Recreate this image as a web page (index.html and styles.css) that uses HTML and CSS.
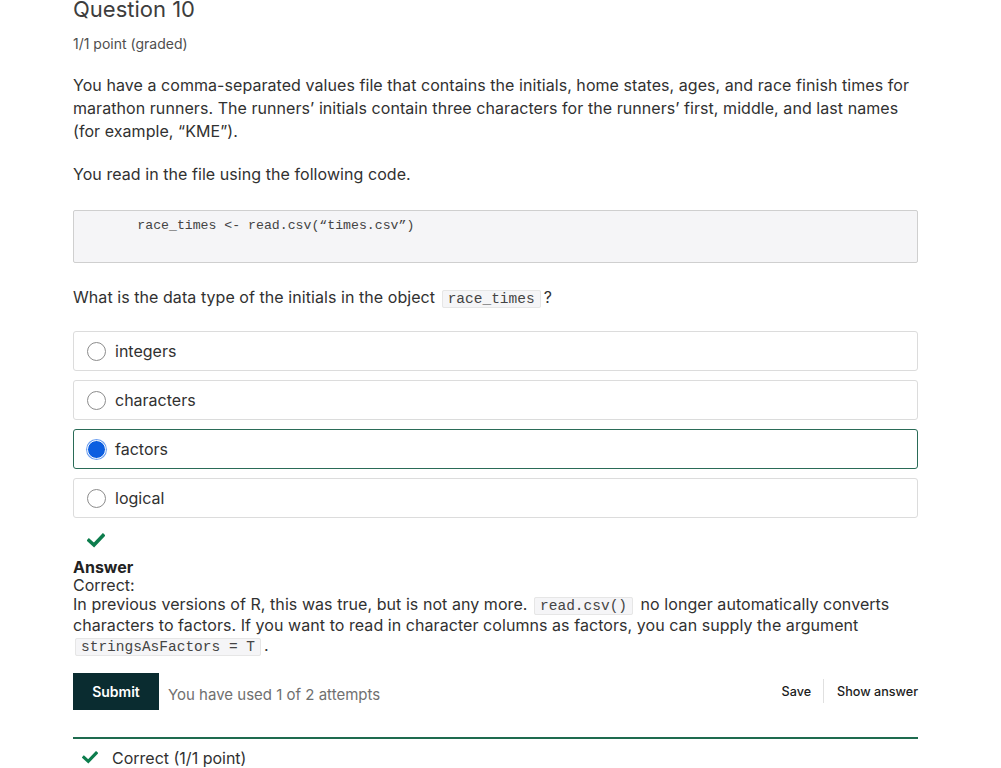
FILE: index.html
```html
<!DOCTYPE html>
<html lang="en">
<head>
<meta charset="utf-8">
<title>Question 10</title>
<link rel="stylesheet" href="styles.css">
</head>
<body>
<main class="problem">
  <h3 class="title">Question 10</h3>
  <div class="points">1/1 point (graded)</div>
  <p class="para">You have a comma-separated values file that contains the initials, home states, ages, and race finish times for marathon runners. The runners’ initials contain three characters for the runners’ first, middle, and last names (for example, “KME”).</p>
  <p class="para">You read in the file using the following code.</p>
  <pre class="codeblock">        race_times &lt;- read.csv(“times.csv”)</pre>
  <p class="para question">What is the data type of the initials in the object <code class="inline">race_times</code>?</p>
  <div class="options">
    <label class="option"><span class="radio"></span><span class="opt-text">integers</span></label>
    <label class="option"><span class="radio"></span><span class="opt-text">characters</span></label>
    <label class="option selected"><span class="radio checked"></span><span class="opt-text">factors</span></label>
    <label class="option"><span class="radio"></span><span class="opt-text">logical</span></label>
  </div>
  <div class="status-check">
    <svg width="18" height="15" viewBox="0 0 18 15"><path d="M2 7.5 L7 12 L16 2.5" fill="none" stroke="#0d7d4d" stroke-width="3.6" stroke-linecap="square"/></svg>
  </div>
  <div class="answer">
    <div class="answer-label">Answer</div>
    <div class="correct-label">Correct:</div>
    <div class="explanation">In previous versions of R, this was true, but is not any more. <code class="inline">read.csv()</code> no longer automatically converts characters to factors. If you want to read in character columns as factors, you can supply the argument <code class="inline">stringsAsFactors = T</code>.</div>
  </div>
  <div class="actions">
    <div class="left-actions">
      <button class="submit">Submit</button>
      <span class="attempts">You have used 1 of 2 attempts</span>
    </div>
    <div class="right-actions">
      <button class="link-btn">Save</button>
      <span class="sep"></span>
      <button class="link-btn">Show answer</button>
    </div>
  </div>
  <div class="notification">
    <svg width="16" height="13" viewBox="0 0 18 15"><path d="M2 7.5 L7 12 L16 2.5" fill="none" stroke="#0d7d4d" stroke-width="3.6" stroke-linecap="square"/></svg>
    <span>Correct (1/1 point)</span>
  </div>
</main>
</body>
</html>
```
FILE: styles.css
```css
html, body {
  margin: 0;
  padding: 0;
  background: #ffffff;
}
body {
  font-family: Inter, "Noto Sans", "Liberation Sans", sans-serif;
  color: #313131;
}
.problem {
  width: 845px;
  margin: 0 0 0 73px;
}
.title {
  font-size: 22px;
  font-weight: 400;
  line-height: 26px;
  color: #3d3d3d;
  margin: -4px 0 0 0;
}
.points {
  font-size: 14px;
  color: #4e4e4e;
  margin-top: 12px;
  line-height: 20px;
}
.para {
  font-size: 16px;
  line-height: 23px;
  letter-spacing: 0.06px;
  margin: 20px 0 0 0;
  color: #313131;
}
.codeblock {
  margin: 24px 0 0 0;
  background: #f5f5f7;
  border: 1px solid #cfcfcf;
  border-radius: 2px;
  height: 53px;
  box-sizing: border-box;
  padding: 7px 0 0 0;
  font-family: "Liberation Mono", "Courier New", monospace;
  font-size: 13.2px;
  line-height: 16px;
  letter-spacing: 0;
  color: #444;
}
.question {
  margin-top: 23px;
}
code.inline {
  font-family: "Liberation Mono", "Courier New", monospace;
  font-size: 14.5px;
  line-height: 1;
  letter-spacing: 0;
  background: #f5f5f7;
  border: 1px solid #e6e6e6;
  border-radius: 2px;
  padding: 0 5px;
  margin: 0 3px 0 2px;
  color: #444;
}
.options {
  margin-top: 22px;
  display: flex;
  flex-direction: column;
  gap: 9px;
}
.option {
  display: flex;
  align-items: center;
  height: 40px;
  box-sizing: border-box;
  border: 1px solid #dcdcdc;
  border-radius: 3px;
  padding-left: 13px;
  font-size: 16px;
  color: #313131;
}
.option.selected {
  border-color: #2a6b57;
}
.radio {
  width: 19px;
  height: 19px;
  box-sizing: border-box;
  border: 1px solid #8c8c8c;
  border-radius: 50%;
  background: #fff;
  margin-right: 9px;
}
.radio.checked {
  border: 1px solid #ffffff;
  background: #0c5ee0;
  box-shadow: 0 0 0 1px #6ea0f0;
}
.status-check {
  margin-top: 14px;
  padding-left: 14px;
  height: 17px;
}
.answer {
  font-size: 16px;
  line-height: 20px;
  color: #313131;
  margin-top: 9px;
}
.answer-label {
  font-weight: 700;
  color: #222;
  line-height: 18px;
}
.correct-label {
  line-height: 18px;
}
.explanation {
  line-height: 20.5px;
  letter-spacing: 0.06px;
}
.actions {
  margin-top: 17px;
  display: flex;
  justify-content: space-between;
  align-items: center;
}
.left-actions {
  display: flex;
  align-items: center;
}
.submit {
  background: #0a2c30;
  color: #fff;
  border: none;
  font-family: inherit;
  font-weight: 600;
  font-size: 14px;
  width: 86px;
  height: 37px;
  padding: 0;
  border-radius: 0;
}
.attempts {
  margin-left: 9px;
  font-size: 15px;
  color: #707070;
  padding-top: 6px;
}
.right-actions {
  display: flex;
  align-items: center;
}
.link-btn {
  background: none;
  border: none;
  font-family: inherit;
  font-size: 12.6px;
  color: #1c1c1c;
  padding: 0;
  font-weight: 500;
}
.sep {
  width: 1px;
  height: 24px;
  background: #e0e0e0;
  margin: 0 13px 0 12px;
}
.notification {
  margin-top: 27px;
  border-top: 2px solid #1e6b4f;
  display: flex;
  align-items: center;
  gap: 14px;
  padding: 9px 0 0 9px;
  font-size: 16px;
  color: #313131;
}
```
